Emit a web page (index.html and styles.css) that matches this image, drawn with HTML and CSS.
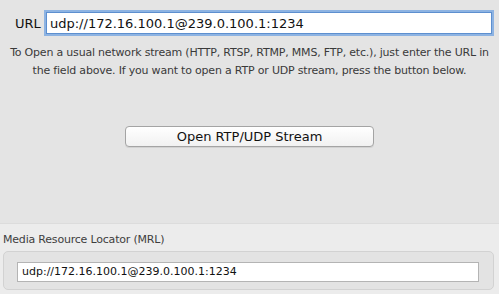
FILE: index.html
```html
<!DOCTYPE html>
<html>
<head>
<meta charset="utf-8">
<link rel="stylesheet" href="styles.css">
</head>
<body>
<div class="panel">
  <div class="top">
    <div class="url-row">
      <span class="url-label">URL</span>
      <div class="url-field">udp://172.16.100.1@239.0.100.1:1234</div>
    </div>
    <p class="help">To Open a usual network stream (HTTP, RTSP, RTMP, MMS, FTP, etc.), just enter the URL in the field above. If you want to open a RTP or UDP stream, press the button below.</p>
    <div class="btn-row">
      <div class="btn">Open RTP/UDP Stream</div>
    </div>
  </div>
  <div class="bottom">
    <div class="mrl-label">Media Resource Locator (MRL)</div>
    <div class="mrl-box">
      <div class="mrl-field">udp://172.16.100.1@239.0.100.1:1234</div>
    </div>
  </div>
</div>
</body>
</html>
```
FILE: styles.css
```css
html, body {
  margin: 0;
  padding: 0;
  width: 499px;
  height: 294px;
  overflow: hidden;
  background: #e4e4e4;
  font-family: "DejaVu Sans", sans-serif;
}
.panel {
  display: flex;
  flex-direction: column;
  height: 294px;
}
.top {
  height: 223px;
  background: #e4e4e4;
  border-bottom: 1px solid #dcdcdc;
}
.url-row {
  display: flex;
  align-items: center;
  padding: 10px 5px 0 15px;
}
.url-label {
  font-size: 13px;
  color: #111;
  width: 29px;
}
.url-field {
  flex: 1;
  height: 17px;
  line-height: 17px;
  background: #fff;
  border: 1px solid #5d8fcf;
  box-shadow: 0 0 0 2px #8db3e2;
  margin: 2px;
  padding: 2px 3px 1px 3px;
  font-size: 13px;
  color: #111;
}
.help {
  margin: 8px 4px 0 4px;
  font-size: 11px;
  letter-spacing: -0.2px;
  line-height: 18px;
  color: #3a3a3a;
  text-align: center;
}
.btn-row {
  display: flex;
  justify-content: center;
  margin-top: 46px;
}
.btn {
  width: 247px;
  height: 19px;
  line-height: 19px;
  border: 1px solid #a4a4a4;
  border-radius: 4px;
  background: linear-gradient(#ffffff, #f1f1f1);
  box-shadow: 0 1px 0 rgba(0,0,0,0.08);
  text-align: center;
  font-size: 13px;
  color: #111;
}
.bottom {
  flex: 1;
  background: #ececec;
  padding: 8px 5px 0 3px;
}
.mrl-label {
  font-size: 11px;
  letter-spacing: -0.2px;
  color: #3e3e3e;
  line-height: 16px;
}
.mrl-box {
  margin-top: 3px;
  height: 39px;
  background: #e3e3e3;
  border: 1px solid #d2d2d2;
  border-radius: 5px;
  padding: 10px 14px 0 13px;
  box-sizing: border-box;
}
.mrl-field {
  height: 20px;
  box-sizing: border-box;
  background: #fff;
  border: 1px solid #b4b4b4;
  padding: 0 4px;
  font-size: 11px;
  line-height: 18px;
  color: #111;
}
```
